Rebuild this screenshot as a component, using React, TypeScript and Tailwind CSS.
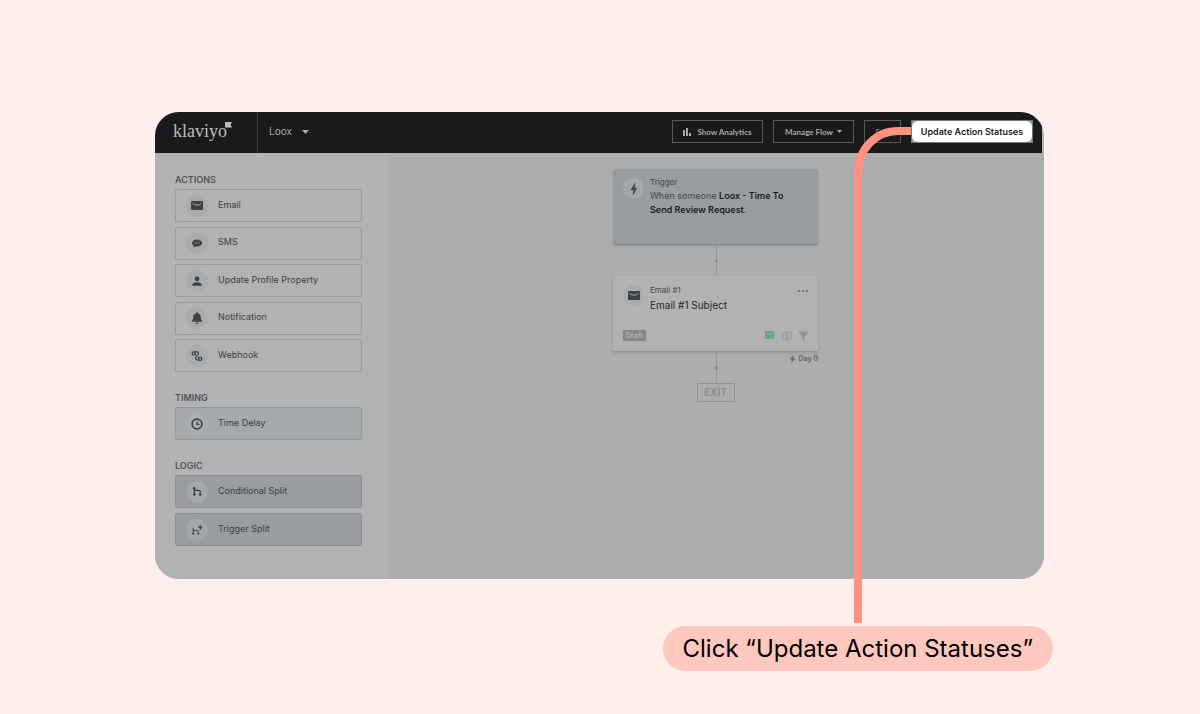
import type { ReactNode } from "react";
import { FaBell } from "react-icons/fa";
import { MdBolt, MdPerson } from "react-icons/md";

function EmailIcon() {
  return (
    <svg width="12" height="9" viewBox="0 0 12 9">
      <rect width="12" height="9" rx="1" fill="currentColor" />
      <path d="M1.6 2 C3.6 4.8 8.4 4.8 10.4 2" fill="none" stroke="#b0b3b6" strokeWidth="1" />
    </svg>
  );
}

function SmsIcon() {
  return (
    <svg width="10" height="9" viewBox="0 0 10 9">
      <path d="M5 0.4 C7.8 0.4 10 1.9 10 4 C10 6.1 7.8 7.6 5 7.6 L3.4 7.4 L1.6 8.8 L1.6 6.6 C0.6 6 0 5 0 4 C0 1.9 2.2 0.4 5 0.4 Z" fill="currentColor" />
      <path d="M2.4 3.5 H3.5 V4.6 H2.4 Z M4.5 3.5 H5.6 V4.6 H4.5 Z M6.6 3.5 H7.7 V4.6 H6.6 Z" fill="#a9acaf" />
    </svg>
  );
}

function WebhookIcon() {
  return (
    <svg width="12" height="12" viewBox="0 0 12 12" fill="none" stroke="currentColor" strokeWidth="1.2">
      <circle cx="2.8" cy="3.4" r="1.6" />
      <circle cx="9.2" cy="8.8" r="1.6" />
      <path d="M4 2 C5.8 1.2 7.8 2 7.4 3.6 C7 5.2 4.6 6.4 4.6 8 C4.6 9.4 6 10.2 7.8 10" />
      <path d="M4.4 4.2 L5.4 4.8 M6.6 7.4 L7.6 8" />
    </svg>
  );
}

function ClockIcon() {
  return (
    <svg width="12" height="12" viewBox="0 0 12 12" fill="none" stroke="currentColor">
      <circle cx="6" cy="6" r="4.9" strokeWidth="1.6" />
      <path d="M6 3.4 V6.3 H8.6" strokeWidth="1.2" />
    </svg>
  );
}

function SplitIcon() {
  return (
    <svg width="12" height="12" viewBox="0 0 12 12" fill="none" stroke="currentColor" strokeWidth="1.2">
      <path d="M3.4 2.4 V9 M3.4 4.4 H8 Q9.2 4.4 9.2 5.6 V9" />
      <circle cx="3.2" cy="2.4" r="0.8" fill="currentColor" />
      <path d="M2 8 H4.8 L3.4 9.8 Z M7.8 8 H10.6 L9.2 9.8 Z" fill="currentColor" strokeWidth="0.6" />
    </svg>
  );
}

function TriggerSplitIcon() {
  return (
    <svg width="12" height="12" viewBox="0 0 12 12" fill="none" stroke="currentColor" strokeWidth="1">
      <path d="M2.2 4 V10 M2.2 6.4 H6.2 Q7.2 6.4 7.2 7.4 V10" />
      <path d="M1.2 9.4 H3.2 L2.2 10.8 Z M6.2 9.4 H8.2 L7.2 10.8 Z" fill="currentColor" strokeWidth="0.5" />
      <path d="M9.8 0.4 L6.8 3.8 H8.8 L8.6 6.4 L11.8 2.8 H9.8 Z" fill="currentColor" stroke="none" />
    </svg>
  );
}

type Action = { label: string; icon: ReactNode };

const actions: Action[] = [
  { label: "Email", icon: <EmailIcon /> },
  { label: "SMS", icon: <SmsIcon /> },
  { label: "Update Profile Property", icon: <MdPerson size={14} /> },
  { label: "Notification", icon: <FaBell size={12} /> },
  { label: "Webhook", icon: <WebhookIcon /> },
];

const timing: Action[] = [{ label: "Time Delay", icon: <ClockIcon /> }];

const logic: Action[] = [
  { label: "Conditional Split", icon: <SplitIcon /> },
  { label: "Trigger Split", icon: <TriggerSplitIcon /> },
];

type SectionProps = {
  title: string;
  items: Action[];
  listClass?: string;
  rowClass: string;
  iconClass: string;
};

function Section({ title, items, listClass = "", rowClass, iconClass }: SectionProps) {
  return (
    <section>
      <h2 className="h-[18px] text-[9px] leading-[18px] font-semibold text-[#50555a]">{title}</h2>
      <ul className={`flex flex-col justify-between ${listClass}`}>
        {items.map((item) => (
          <li key={item.label}>
            <button
              className={`flex h-[33px] w-full items-center gap-2.5 rounded-xs border pl-2.5 text-left text-[9px] text-[#3c4146] ${rowClass}`}
            >
              <span className={`flex size-[22px] items-center justify-center rounded-full ${iconClass}`}>
                {item.icon}
              </span>
              <span className="pb-0.5">{item.label}</span>
            </button>
          </li>
        ))}
      </ul>
    </section>
  );
}

function Sidebar() {
  return (
    <aside className="flex w-[233px] shrink-0 flex-col gap-[17px] bg-[#b2b2b2] pt-[18px] pr-[26px] pb-[33px] pl-5">
      <Section
        title="ACTIONS"
        items={actions}
        listClass="h-[183px]"
        rowClass="border-[#989a9f]"
        iconClass="bg-[#a9acaf]"
      />
      <Section title="TIMING" items={timing} rowClass="border-[#92979c] bg-[#a4a9ac]" iconClass="bg-[#a8adaf]" />
      <Section
        title="LOGIC"
        items={logic}
        listClass="h-[71px]"
        rowClass="border-[#8c8f96] bg-[#999ca1]"
        iconClass="bg-[#a4a7a9]"
      />
    </aside>
  );
}

function Header() {
  return (
    <header className="mr-0.5 flex h-[41px] items-center bg-[#1a1a1c] pr-[9px] text-[#a9a9aa]">
      <a href="#" className="flex w-[103px] items-center self-stretch border-r border-[#3a3a3c] pl-[18px] text-[#bbbbbc]">
        <span className="pb-1 font-['Liberation_Serif',serif] text-[18px] leading-5">klaviyo</span>
        <svg width="7" height="6" viewBox="0 0 7 6" className="mb-4 -ml-0.5">
          <path d="M0 0 H7 L5.6 2.7 L7 5.4 H0 Z" fill="currentColor" />
        </svg>
      </a>
      <button className="flex items-center gap-2.5 pb-0.5 pl-[11px] text-[10px]">
        Loox
        <svg width="7" height="4" viewBox="0 0 7 4">
          <path d="M0 0 H7 L3.5 4 Z" fill="currentColor" />
        </svg>
      </button>
      <div className="mb-0.5 ml-auto flex gap-2.5 font-['Lato',sans-serif] text-[8px] font-bold">
        <button className="flex h-[23px] w-[91px] items-center justify-center gap-1.5 border border-[#58585a]">
          <svg width="8" height="8" viewBox="0 0 8 8" fill="currentColor">
            <path d="M0 2 H2 V8 H0 Z M3 0 H5 V8 H3 Z M6 5 H8 V8 H6 Z" />
          </svg>
          Show Analytics
        </button>
        <button className="flex h-[23px] w-[81px] items-center justify-center gap-1 border border-[#58585a]">
          Manage Flow
          <svg width="5" height="3" viewBox="0 0 5 3">
            <path d="M0 0 H5 L2.5 3 Z" fill="currentColor" />
          </svg>
        </button>
        <button className="h-[23px] w-[37px] border border-[#58585a] text-[#777778]">Exit</button>
        <button className="flex h-[23px] w-[122px] border border-[#777778] bg-[#a0a0a0] font-['Inter',sans-serif] text-[9px] font-semibold text-[#1c1c1e]">
          <span className="flex h-full w-full items-center justify-center rounded-md bg-white">
            Update Action Statuses
          </span>
        </button>
      </div>
    </header>
  );
}

function Connector() {
  return (
    <div className="ml-[103px] flex h-[31px] w-px items-center justify-center bg-[#92959d]">
      <span className="size-[3px] shrink-0 rounded-full bg-[#83868b]" />
    </div>
  );
}

function TriggerCard() {
  return (
    <article className="flex h-[76px] gap-1.5 rounded-xs border-b border-[#85888e] bg-[#999ca1] px-2.5 pt-[7px] shadow-sm">
      <span className="mt-0.5 flex size-[21px] shrink-0 items-center justify-center rounded-full bg-[#a5a8aa] text-[#44494e]">
        <MdBolt size={16} />
      </span>
      <div>
        <h3 className="text-[8px] leading-3 text-[#44494e]">Trigger</h3>
        <p className="mt-px text-[9px] leading-[14px] text-[#44494e]">
          When someone <b className="font-semibold text-[#1c1d1f]">Loox - Time To Send Review Request</b>.
        </p>
      </div>
    </article>
  );
}

function EmailCard() {
  return (
    <article className="flex h-[76px] flex-col justify-between rounded-xs border-b border-[#8f9192] bg-[#b2b2b2] px-2.5 pt-2 pb-2.5 shadow-sm">
      <div className="flex gap-1.5">
        <span className="mt-px flex size-[21px] items-center justify-center rounded-full bg-[#a9acaf] text-[#3d4247]">
          <EmailIcon />
        </span>
        <div>
          <h3 className="text-[8px] leading-3 text-[#44494e]">Email #1</h3>
          <p className="mt-px text-[10px] leading-4 text-[#26282b]">Email #1 Subject</p>
        </div>
        <button aria-label="More options" className="mt-1 ml-auto flex h-1.5 items-center gap-0.5">
          <i className="size-0.5 rounded-full bg-[#5b6065]" />
          <i className="size-0.5 rounded-full bg-[#5b6065]" />
          <i className="size-0.5 rounded-full bg-[#5b6065]" />
        </button>
      </div>
      <div className="flex items-center justify-between">
        <span className="rounded-[1px] bg-[#83868d] px-[3px] text-[7px] leading-[11px] font-semibold text-[#b2b2b2]">
          Draft
        </span>
        <div className="flex items-center gap-[7px] text-[#929498]">
          <svg width="10" height="9" viewBox="0 0 10 9">
            <rect width="9.4" height="8" rx="1" fill="#62a77b" />
            <path d="M1.2 2 C3 4.2 6.4 4.2 8.2 2" fill="none" stroke="#b2b2b2" strokeWidth="0.9" />
            <path d="M5.4 6.2 L7 7.8 L9.8 5" fill="none" stroke="#b2b2b2" strokeWidth="2.2" />
            <path d="M5.4 6.2 L7 7.8 L9.8 5" fill="none" stroke="#62a77b" strokeWidth="1.2" />
          </svg>
          <svg width="10" height="10" viewBox="0 0 10 10" fill="none" stroke="currentColor" strokeWidth="0.9">
            <rect x="0.6" y="1.4" width="5.6" height="7.8" rx="2.6" />
            <rect x="3.8" y="0.6" width="5.6" height="7.8" rx="2.6" />
          </svg>
          <svg width="9" height="10" viewBox="0 0 9 10" fill="currentColor">
            <path d="M0 0.5 H9 V1.8 L5.8 5.4 V9.5 L3.2 7.8 V5.4 L0 1.8 Z" />
          </svg>
        </div>
      </div>
    </article>
  );
}

function Canvas() {
  return (
    <main className="flex flex-1 justify-center bg-[#acaeae] pt-4 pr-px">
      <div className="w-[205px]">
        <TriggerCard />
        <Connector />
        <EmailCard />
        <div className="relative">
          <Connector />
          <span className="absolute top-px right-0 flex items-center text-[7px] leading-3 font-bold text-[#666a70]">
            <svg width="7" height="8" viewBox="0 0 7 8" className="mr-0.5">
              <path d="M4.4 0 L0.4 4.6 H2.8 L2.4 8 L6.6 3.2 H4.2 Z" fill="currentColor" />
            </svg>
            Day 0
          </span>
        </div>
        <div className="mx-auto h-[19px] w-[38px] rounded-[1px] border border-[#8f9298] text-center text-[10px] leading-[17px] font-bold text-[#8a8d93]">
          EXIT
        </div>
      </div>
    </main>
  );
}

export default function App() {
  return (
    <div className="min-h-screen bg-[#ffefec] pt-28 pr-[156px] pb-[43px] pl-[155px] font-['Inter',sans-serif]">
      <div className="relative">
        <div className="overflow-hidden rounded-3xl bg-[#b2b2b2]">
          <Header />
          <div className="flex">
            <Sidebar />
            <Canvas />
          </div>
        </div>
        <svg
          width="57"
          height="496"
          viewBox="0 0 57 496"
          fill="none"
          className="absolute top-[15px] right-[133px]"
        >
          <path d="M57 4 H44 C22 4 4 22 4 46 V496" stroke="#ff937f" strokeWidth="8" />
        </svg>
      </div>
      <p className="mt-[47px] -mr-[9px] ml-auto h-[45px] w-fit rounded-full bg-[#ffc8be] px-5 text-[24px] leading-[45px] text-black">
        Click “Update Action Statuses”
      </p>
    </div>
  );
}
